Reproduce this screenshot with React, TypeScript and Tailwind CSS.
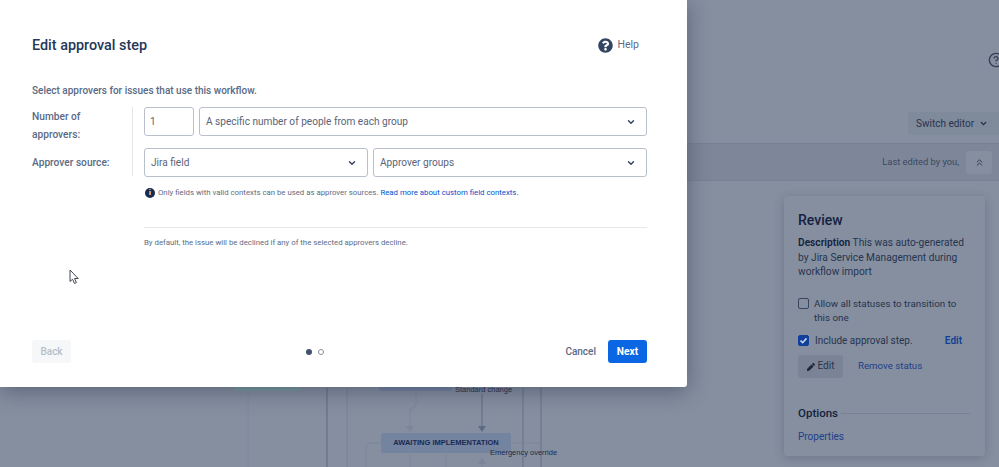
import { FaPen, FaQuestionCircle } from "react-icons/fa";
import { FiHelpCircle } from "react-icons/fi";
import { LuChevronDown, LuChevronsUp } from "react-icons/lu";

const font = "font-['Roboto',sans-serif]";

const Select = ({ label, className }: { label: string; className: string }) => (
  <div
    className={`h-[29px] flex items-center justify-between pl-[6px] pr-[10px] border border-[#b9c0cc] rounded-[3px] text-[10.1px] text-[#5a6479] bg-white ${className}`}
  >
    <span>{label}</span>
    <LuChevronDown className="text-[#344563] w-[10px] h-[10px]" strokeWidth={3.5} />
  </div>
);

const Diagram = () => (
  <>
    <svg className="absolute left-0 top-[380px]" width="687" height="87" fill="none">
      <path d="M248 8V87" stroke="#7f8a9d" strokeWidth="1" />
      <path d="M327 8V87" stroke="#64708a" strokeWidth="1.2" />
      <path d="M347 8V87" stroke="#76829a" strokeWidth="1" />
      <path d="M523 8V87M541 8V87" stroke="#6b7790" strokeWidth="1.2" />
      <path d="M416 12V24Q416 28 412 28Q410 28 410 32V46" stroke="#7a869c" strokeWidth="1" />
      <path d="M406 46H414L410 52Z" fill="#7a869c" />
      <path d="M482 14V47" stroke="#5d6a84" strokeWidth="1" />
      <path d="M478 46H486L482 52Z" fill="#5d6a84" />
      <path d="M511 63H541" stroke="#7a869c" strokeWidth="1" />
      <path d="M381 63H371Q366 63 366 68V87" stroke="#7a869c" strokeWidth="1" />
      <path d="M410 74V87M446 74V87M482 80V87" stroke="#7a869c" strokeWidth="1" />
      <path d="M478 84H486L482 78Z" fill="#7a869c" />
    </svg>
    <div className="absolute left-[234px] top-[380px] w-[67px] h-[11px] bg-[#7b9a9d] rounded-b-[3px]" />
    <div className="absolute left-[379px] top-[380px] w-[73px] h-[11px] bg-[#74839f] rounded-b-[3px]" />
    <div className="absolute left-[455px] top-[384px] text-[7.5px] leading-[11px] text-[#1f2c48] font-['Liberation_Sans',sans-serif]">
      Standard change
    </div>
    <div className="absolute left-[381px] top-[433px] w-[130px] h-[20px] rounded-[3px] bg-[#74839f] flex items-center justify-center text-[7.5px] font-bold text-[#172b55] font-['Liberation_Sans',sans-serif]">
      AWAITING IMPLEMENTATION
    </div>
    <div className="absolute left-[490px] top-[447px] text-[7.5px] leading-[11px] text-[#1f2c48] font-['Liberation_Sans',sans-serif]">
      Emergency override
    </div>
  </>
);

const ReviewPanel = () => (
  <div className="w-[201px] h-[260px] ml-[784px] mt-[15px] px-[14px] pt-[14px] bg-[#858f9f] rounded-[3px] shadow-[0_2px_10px_rgba(40,50,75,0.25)] text-[#27344f] text-[10px] leading-[14.5px]">
    <div className="text-[14px] leading-[20px] font-medium text-[#14213f]">Review</div>
    <p className="mt-[6px] w-[173px] text-[10.2px]">
      <b className="font-semibold text-[#14213f]">Description</b> This was auto-generated by Jira
      Service Management during workflow import
    </p>
    <div className="mt-[17px] flex items-start gap-[5px]">
      <span className="mt-px w-[9px] h-[9px] shrink-0 border border-[#39445e] rounded-[2px] box-content" />
      <span className="w-[150px] text-[9.8px]">Allow all statuses to transition to this one</span>
    </div>
    <div className="mt-[8px] flex items-center">
      <span className="w-[9px] h-[9px] shrink-0 box-content border border-[#10409c] bg-[#10409c] rounded-[2px] text-[#c8d2e2] flex items-center justify-center">
        <svg width="9" height="9" viewBox="0 0 9 9" fill="none">
          <path d="M1.5 4.6L3.7 6.7L7.5 2.4" stroke="currentColor" strokeWidth="1.6" />
        </svg>
      </span>
      <span className="ml-[6px]">Include approval step.</span>
      <span className="ml-auto mr-[9px] font-semibold text-[#103f95]">Edit</span>
    </div>
    <div className="mt-[7px] flex items-center">
      <div className="w-[45px] h-[23px] rounded-[3px] bg-[#7a8496] flex items-center justify-center gap-[3px]">
        <FaPen className="w-[8px] h-[8px] text-[#1a2740]" />
        <span>Edit</span>
      </div>
      <span className="ml-[15px] text-[9.7px] text-[#21408a]">Remove status</span>
    </div>
    <div className="mt-[28px] flex items-center gap-[3px]">
      <span className="text-[11.5px] font-medium text-[#14213f]">Options</span>
      <span className="flex-1 h-px bg-[#778296] mr-[1px]" />
    </div>
    <div className="mt-[9px] text-[#21408a]">Properties</div>
  </div>
);

const Modal = () => (
  <div className="absolute left-0 top-0 w-[687px] h-[387px] bg-white rounded-br-[3px] shadow-[0_4px_22px_rgba(35,45,70,0.45)] pl-[32px] pr-[40px] pt-[35px] flex flex-col">
    <div className="h-[22px] flex items-center justify-between">
      <h1 className="text-[14.4px] font-medium text-[#253858]">Edit approval step</h1>
      <div className="flex items-center gap-[4px] -mt-[2px]">
        <FaQuestionCircle className="w-[15px] h-[15px] text-[#344563]" />
        <span className="text-[10.5px] text-[#5e6c84] mr-[8px]">Help</span>
      </div>
    </div>
    <p className="mt-[25px] h-[18px] text-[10px] leading-[18px] font-medium text-[#5a6a85]">
      Select approvers for issues that use this workflow.
    </p>
    <div className="mt-[7px] flex">
      <div className="w-[101px] h-[69px] border-r border-[#e3e6ea] text-[10.2px] font-medium text-[#5a6a85]">
        <div className="leading-[17.5px] mt-[1px]">
          Number of
          <br />
          approvers:
        </div>
        <div className="mt-[11px] leading-[17px]">Approver source:</div>
      </div>
      <div className="ml-[11px] flex-1">
        <div className="flex gap-[5px]">
          <div className="w-[50px] h-[29px] pl-[5px] flex items-center border border-[#b9c0cc] rounded-[3px] text-[10.1px] text-[#5a6479]">
            1
          </div>
          <Select label="A specific number of people from each group" className="flex-1" />
        </div>
        <div className="mt-[12px] flex gap-[5px]">
          <Select label="Jira field" className="w-[224px]" />
          <Select label="Approver groups" className="flex-1" />
        </div>
        <div className="mt-[10px] ml-px h-[12px] flex items-center gap-[3px] text-[7.8px] text-[#5e6c84]">
          <span className="w-[10px] h-[10px] rounded-full bg-[#172b4d] text-white text-[7px] leading-[10px] font-bold text-center">
            i
          </span>
          <span>
            Only fields with valid contexts can be used as approver sources.{" "}
            <span className="text-[#0052cc]">Read more about custom field contexts.</span>
          </span>
        </div>
        <div className="mt-[28px] h-px bg-[#e6e8ec]" />
        <p className="mt-[9px] text-[7.8px] leading-[12px] text-[#5e6c84]">
          By default, the issue will be declined if any of the selected approvers decline.
        </p>
      </div>
    </div>
    <div className="mt-[91px] flex items-center justify-between relative">
      <div className="w-[39px] h-[23px] rounded-[3px] bg-[#f6f7f9] text-[10px] font-medium text-[#b7bdc9] flex items-center justify-center">
        Back
      </div>
      <div className="absolute left-[274px] flex gap-[6px]">
        <span className="w-[6px] h-[6px] rounded-full bg-[#42526e]" />
        <span className="w-[6px] h-[6px] rounded-full border border-[#8993a4]" />
      </div>
      <div className="flex items-center gap-[12px]">
        <span className="text-[10px] font-medium text-[#5a6a85]">Cancel</span>
        <span className="w-[39px] h-[23px] rounded-[3px] bg-[#0b66e4] text-white text-[10.2px] font-bold flex items-center justify-center">
          Next
        </span>
      </div>
    </div>
    <svg className="absolute left-[69px] top-[269px]" width="11" height="16" viewBox="0 0 11 16">
      <path
        d="M1 1V12.5L3.6 10.2L5.5 14.5L7.4 13.6L5.6 9.5H9.2Z"
        fill="white"
        stroke="#3f4652"
        strokeWidth="1"
      />
    </svg>
  </div>
);

export default function App() {
  return (
    <div className={`relative w-[999px] h-[467px] overflow-hidden bg-[#858f9f] ${font}`}>
      <div className="flex flex-col h-full">
        <div className="h-[52px] flex justify-end pr-0">
          <FiHelpCircle className="mt-[52px] -mr-[5px] w-[16px] h-[16px] text-[#333f58] shrink-0" />
        </div>
        <div className="mt-[60px] h-[23px] flex justify-end">
          <div className="w-[91px] h-[23px] bg-[#7f8a9b] rounded-l-[3px] pl-[8px] flex items-center gap-[5px] text-[10px] text-[#27344f]">
            <span>Switch editor</span>
            <LuChevronDown className="w-[9px] h-[9px] text-[#1d2a45]" strokeWidth={3.5} />
          </div>
        </div>
        <div className="mt-[8px] h-[38px] bg-[#7d8799] border-y border-[#778295] flex items-center justify-end pr-[7px] text-[9.3px] text-[#3c4860]">
          <span>Last edited by you,</span>
          <div className="ml-[7px] w-[26px] h-[23px] rounded-[3px] bg-[#858f9f] flex items-center justify-center">
            <LuChevronsUp className="w-[11px] h-[11px] text-[#27344f]" />
          </div>
        </div>
        <ReviewPanel />
      </div>
      <Diagram />
      <Modal />
    </div>
  );
}
